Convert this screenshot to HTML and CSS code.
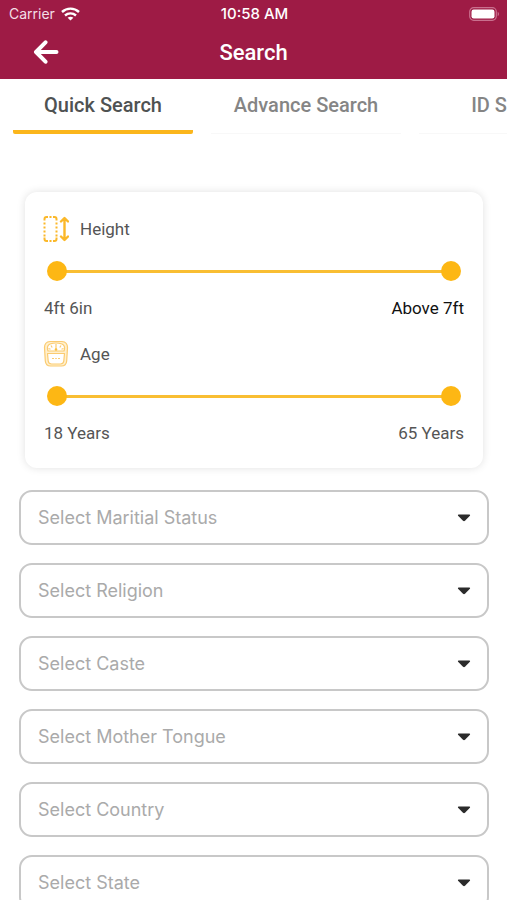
FILE: index.html
```html
<!DOCTYPE html>
<html lang="en">
<head>
<meta charset="utf-8">
<meta name="viewport" content="width=device-width, initial-scale=1">
<title>Search</title>
<link rel="stylesheet" href="styles.css">
</head>
<body>
<header class="top">
  <div class="status">
    <span class="carrier">Carrier
      <svg width="19" height="14" viewBox="0 0 19 14" fill="none" stroke="#fff" stroke-width="2.4" aria-hidden="true"><path d="M1 5C5.800.5 13.200.5 18 5M4 8.500c3.200-2.900 7.800-2.900 11 0"/><path d="M9.500 13.600 6.600 10.800c1.700-1.500 4.100-1.500 5.800 0z" fill="#fff" stroke="none"/></svg>
    </span>
    <span class="time">10:58 AM</span>
    <svg class="battery" width="31" height="14" viewBox="0 0 31 14" aria-hidden="true"><rect x=".7" y=".7" width="26.6" height="12.6" rx="4" fill="none" stroke="#c9708e" stroke-width="1.2"/><rect x="2.5" y="2.5" width="23" height="9" rx="2.2" fill="#fff"/><path d="M28.700 4.800c1.800.7 1.800 3.700 0 4.400z" fill="#c9708e"/></svg>
  </div>
  <div class="bar">
    <button class="back" type="button" aria-label="Back">
      <svg width="26" height="24" viewBox="0 0 26 24" fill="none" stroke="#fff" stroke-width="4" stroke-linecap="round" stroke-linejoin="round"><path d="M12.500 2.300 3 12l9.500 9.700M3.500 12H23.500"/></svg>
    </button>
    <h1 class="title">Search</h1>
  </div>
</header>
<nav class="tabs">
  <a class="tab tab-active" href="#quick" aria-current="page">Quick Search</a>
  <a class="tab" href="#advance">Advance Search</a>
  <a class="tab" href="#id">ID Search</a>
</nav>
<main class="content">
  <section class="card">
    <div class="range">
      <h2 class="range-title">
        <svg width="26" height="28" viewBox="0 0 26 28" fill="none" stroke="#fbb829" aria-hidden="true"><path d="M1.500 5.500V4q0-2 2-2H5M10 2h1.500q2 0 2 2v1.500M1.500 22.500V24q0 2 2 2H5M10 26h1.500q2 0 2-2v-1.500M6.500 2h2M6.500 26h2" stroke-width="2"/><path d="M1.500 7.500v14M13.500 7.500v14" stroke-width="2" stroke-dasharray="2 2"/><path d="M21.500 4v20M18 6.500 21.500 3 25 6.500M18 21.500l3.500 3.500 3.500-3.500" stroke-width="2.4" stroke-linecap="round" stroke-linejoin="round"/></svg>
        Height
      </h2>
      <div class="slider">
        <input type="range" min="0" max="100" value="0" aria-label="Minimum height">
        <input type="range" min="0" max="100" value="100" aria-label="Maximum height">
      </div>
      <div class="limits"><span>4ft 6in</span><span class="limit-strong">Above 7ft</span></div>
    </div>
    <div class="range">
      <h2 class="range-title">
        <svg width="26" height="28" viewBox="0 0 26 28" fill="none" stroke="#fbcb70" stroke-linejoin="round" aria-hidden="true"><path d="M7 1.500h12q5.500.5 5.500 6l-.8 13.500q-.5 5-5.200 5H7.500q-4.700 0-5.200-5L1.500 7.500q0-5.500 5.500-6z" fill="#fff0cf" stroke-width="1.200"/><path d="M7 4q6-2 12 0 3 1.500 2.500 5l-.5 2H5l-.5-2Q4 5.500 7 4zM4.500 13.500h17l-.7 7.500q-.4 3-3.300 3h-9q-2.900 0-3.300-3z" fill="#fff" stroke-width="1.200"/><path d="M13 4v5M8 5.500l1.200 2M18 5.500l-1.200 2M5.500 8.500l2 .7M20.500 8.500l-2 .7" stroke-width="1.200"/><circle cx="13" cy="9.500" r="1.300" fill="#fbc040" stroke="none"/><path d="M9 18.500h2M12.200 18.500h1.600M15 18.500h2" stroke-width="1.200"/></svg>
        Age
      </h2>
      <div class="slider">
        <input type="range" min="18" max="65" value="18" aria-label="Minimum age">
        <input type="range" min="18" max="65" value="65" aria-label="Maximum age">
      </div>
      <div class="limits"><span>18 Years</span><span>65 Years</span></div>
    </div>
  </section>
  <form class="fields">
    <div class="field"><select aria-label="Marital status"><option>Select Maritial Status</option></select><svg class="caret" width="14" height="8" viewBox="0 0 14 8" aria-hidden="true"><path d="M1.500.5h11q1 .5.4 1.200L8 6.800q-1 .9-2 0L1.100 1.700Q.5 1 1.500.5z"/></svg></div>
    <div class="field"><select aria-label="Religion"><option>Select Religion</option></select><svg class="caret" width="14" height="8" viewBox="0 0 14 8" aria-hidden="true"><path d="M1.500.5h11q1 .5.4 1.200L8 6.800q-1 .9-2 0L1.100 1.700Q.5 1 1.500.5z"/></svg></div>
    <div class="field"><select aria-label="Caste"><option>Select Caste</option></select><svg class="caret" width="14" height="8" viewBox="0 0 14 8" aria-hidden="true"><path d="M1.500.5h11q1 .5.4 1.200L8 6.800q-1 .9-2 0L1.100 1.700Q.5 1 1.500.5z"/></svg></div>
    <div class="field"><select aria-label="Mother tongue"><option>Select Mother Tongue</option></select><svg class="caret" width="14" height="8" viewBox="0 0 14 8" aria-hidden="true"><path d="M1.500.5h11q1 .5.4 1.200L8 6.800q-1 .9-2 0L1.100 1.700Q.5 1 1.500.5z"/></svg></div>
    <div class="field"><select aria-label="Country"><option>Select Country</option></select><svg class="caret" width="14" height="8" viewBox="0 0 14 8" aria-hidden="true"><path d="M1.500.5h11q1 .5.4 1.200L8 6.800q-1 .9-2 0L1.100 1.700Q.5 1 1.500.5z"/></svg></div>
    <div class="field"><select aria-label="State"><option>Select State</option></select><svg class="caret" width="14" height="8" viewBox="0 0 14 8" aria-hidden="true"><path d="M1.500.5h11q1 .5.4 1.200L8 6.800q-1 .9-2 0L1.100 1.700Q.5 1 1.500.5z"/></svg></div>
  </form>
</main>
</body>
</html>
```
FILE: styles.css
```css
* { box-sizing: border-box; }

body {
  margin: 0;
  height: 100vh;
  display: flex;
  flex-direction: column;
  overflow: hidden;
  background: #fff;
  color: #555;
  font-family: Roboto, sans-serif;
}

.top {
  flex: none;
  background: #9e1b45;
  color: #fff;
}

.status {
  display: grid;
  grid-template-columns: 1fr auto 1fr;
  align-items: center;
  height: 27px;
  padding: 0 7px 0 9px;
  font: 14px/27px Inter, sans-serif;
}

.carrier {
  display: flex;
  align-items: center;
  gap: 6px;
  color: #f3dfe6;
}

.time {
  font-size: 15px;
  font-weight: 500;
}

.battery { justify-self: end; }

.bar {
  display: grid;
  grid-template-columns: 1fr auto 1fr;
  align-items: center;
  height: 52px;
  padding: 0 33px 2px;
}

.back {
  display: flex;
  justify-self: start;
  padding: 0;
  border: 0;
  background: none;
}

.title {
  margin: 0;
  font-size: 22px;
  font-weight: 500;
}

.tabs {
  flex: none;
  display: flex;
  gap: 18px;
  padding-left: 13px;
  overflow: hidden;
}

.tab {
  flex: none;
  width: 190px;
  height: 55px;
  border-bottom: 1px solid #f8f8f8;
  color: #858585;
  font-size: 20px;
  font-weight: 500;
  line-height: 52px;
  text-align: center;
  text-decoration: none;
}

.tab-active {
  width: 180px;
  border-bottom: 4px solid #fbb61c;
  border-radius: 2px;
  color: #4f5252;
}

.content {
  flex: 1;
  min-height: 0;
  overflow-y: auto;
  scrollbar-width: none;
  padding: 58px 18px 0 19px;
}

.card {
  margin: 0 6px;
  padding: 23px 19px;
  border-radius: 12px;
  box-shadow: 0 0 8px rgba(0, 0, 0, 0.12);
  display: grid;
  gap: 20px;
}

.range-title {
  display: flex;
  align-items: center;
  gap: 11px;
  height: 28px;
  margin: 0 0 0 -1px;
  font-size: 17px;
  font-weight: 400;
}

.slider {
  display: grid;
  align-items: center;
  height: 20px;
  margin: 18px 3px 15px;
  background: linear-gradient(#f9be32, #f9be32) center / calc(100% - 20px) 3px no-repeat;
}

.slider input {
  grid-area: 1 / 1;
  appearance: none;
  width: 100%;
  height: 20px;
  margin: 0;
  background: none;
  pointer-events: none;
}

.slider input::-webkit-slider-thumb {
  appearance: none;
  width: 20px;
  height: 20px;
  border-radius: 50%;
  background: #fdb714;
  pointer-events: auto;
}

.limits {
  display: flex;
  justify-content: space-between;
  font-size: 17px;
  line-height: 24px;
}

.limit-strong { color: #111; }

.fields {
  display: grid;
  gap: 18px;
  padding: 22px 0 18px;
}

.field {
  display: grid;
  align-items: center;
}

.field select {
  grid-area: 1 / 1;
  appearance: none;
  width: 100%;
  height: 55px;
  padding: 0 40px 0 17px;
  border: 2px solid #c8c8c8;
  border-radius: 13px;
  background: #fff;
  color: #aaa;
  font: 18px Inter, sans-serif;
}

.caret {
  grid-area: 1 / 1;
  justify-self: end;
  margin-right: 18px;
  fill: #2b2b2b;
  pointer-events: none;
}
```
